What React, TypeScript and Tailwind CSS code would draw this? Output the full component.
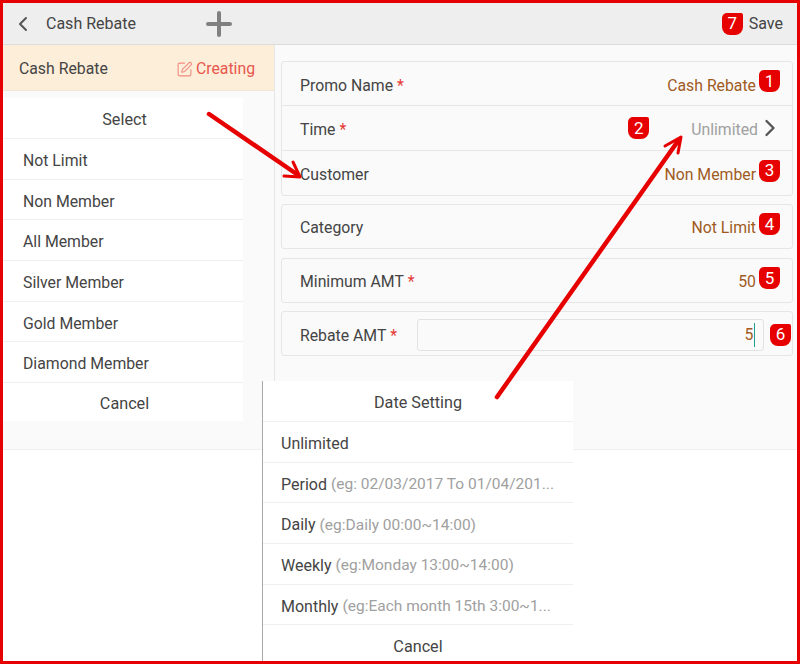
import React from 'react';
import { ChevronLeft, ChevronRight, SquarePen } from 'lucide-react';

const Badge: React.FC<{ n: number }> = ({ n }) => (
  <span className="flex h-[22px] w-[21px] shrink-0 items-center justify-center rounded-tl-[5px] rounded-tr-[2px] rounded-br-[8px] rounded-bl-[8px] bg-[#e60000] text-[17px] leading-none text-white">
    {n}
  </span>
);

const Star = () => <span className="ml-[4px] text-[#e53935]">*</span>;

const Row: React.FC<{ label: string; required?: boolean; value: string; n: number; last?: boolean; h?: string; pt?: string }> = ({ label, required, value, n, last, h = 'h-[44px]', pt = 'pt-[3px]' }) => (
  <div className={`flex ${h} items-center pl-[18px] pr-[12px] ${last ? '' : 'border-b border-[#e6e6e6]'}`}>
    <span className={pt}>{label}</span>
    {required && <span className={pt}><Star /></span>}
    <span className={`ml-auto mr-[3px] ${pt} text-[#a05a1e]`}>{value}</span>
    <span className="mb-[5px]"><Badge n={n} /></span>
  </div>
);

const Card: React.FC<{ children: React.ReactNode; className?: string }> = ({ children, className = '' }) => (
  <div className={`rounded-[3px] border border-[#e6e6e6] bg-[#fafafa] ${className}`}>{children}</div>
);

const selectOptions = ['Not Limit', 'Non Member', 'All Member', 'Silver Member', 'Gold Member', 'Diamond Member'];

const dateOptions = [
  { name: 'Unlimited', hint: '' },
  { name: 'Period', hint: '(eg: 02/03/2017 To 01/04/201...' },
  { name: 'Daily', hint: '(eg:Daily 00:00~14:00)' },
  { name: 'Weekly', hint: '(eg:Monday 13:00~14:00)' },
  { name: 'Monthly', hint: '(eg:Each month 15th 3:00~1...' },
];

export default function App() {
  return (
    <div className="relative box-border h-[664px] w-[800px] overflow-hidden border-[3px] border-[#e60000] bg-white font-['Roboto',sans-serif] text-[15.8px] text-[#444]">
      {/* top bar */}
      <div className="flex h-[42px] items-center border-b border-[#dcdcdc] bg-[#eeeeee] pl-[8px] pr-[14px]">
        <ChevronLeft size={24} strokeWidth={2} className="text-[#555]" />
        <span className="ml-[11px] pt-[1px] text-[16px]">Cash Rebate</span>
        <svg width="26" height="26" viewBox="0 0 26 26" className="ml-[70px]">
          <path d="M13 2v22M2 13h22" stroke="#808080" strokeWidth="4" strokeLinecap="round" />
        </svg>
        <div className="ml-auto flex items-center gap-[6px]">
          <Badge n={7} />
          <span className="pt-[1px] text-[16px]">Save</span>
        </div>
      </div>

      <div className="flex h-[405px] border-b border-[#f0f0f0] bg-[#fafafa]">
        {/* left list */}
        <div className="w-[272px] shrink-0 border-r border-[#e6e6e6]">
          <div className="flex h-[46px] items-center justify-between border-b border-[#f0e6d6] bg-[#fdeed9] pl-[16px] pr-[19px] pt-[3px]">
            <span>Cash Rebate</span>
            <span className="flex items-center gap-[3px] text-[#e8574e]">
              <SquarePen size={17} strokeWidth={1.5} className="text-[#ef8a80]" />
              Creating
            </span>
          </div>
        </div>

        {/* form */}
        <div className="flex-1 pl-[6px] pr-[4px] pt-[16px]">
          <Card>
            <Row label="Promo Name" required value="Cash Rebate" n={1} pt="pt-[5px]" />
            <div className="flex h-[45px] items-center border-b border-[#e6e6e6] pl-[18px] pr-[8px]">
              <span className="pt-[3px]">Time</span>
              <span className="pt-[3px]"><Star /></span>
              <span className="ml-auto"><Badge n={2} /></span>
              <span className="ml-[42px] pt-[3px] text-[#a0a0a0]">Unlimited</span>
              <ChevronRight size={28} strokeWidth={2} className="-ml-[2px] text-[#555]" />
            </div>
            <Row label="Customer" value="Non Member" n={3} last h="h-[44px]" />
          </Card>
          <Card className="mt-[8px]">
            <Row label="Category" value="Not Limit" n={4} last h="h-[43px]" />
          </Card>
          <Card className="mt-[9px]">
            <Row label="Minimum AMT" required value="50" n={5} last h="h-[43px]" />
          </Card>
          <Card className="mt-[8px]">
            <div className="flex h-[43px] items-center pl-[18px] pr-[1px]">
              <span className="pt-[4px]">Rebate AMT</span>
              <span className="pt-[4px]"><Star /></span>
              <div className="ml-[20px] mt-[3px] flex h-[32px] flex-1 items-center justify-end rounded-[3px] border border-[#e2e2e2] pr-[8px] text-[#a05a1e]">
                5<span className="h-[24px] w-[1.5px] bg-[#1fa090]" />
              </div>
              <span className="ml-[6px] mt-[2px]"><Badge n={6} /></span>
            </div>
          </Card>
        </div>
      </div>

      {/* Select dialog */}
      <div className="absolute left-0 top-[95px] w-[240px] bg-white">
        <div className="flex h-[41px] items-center justify-center border-b border-[#efefef] pl-[3px] pt-[4px] text-[16.2px]">Select</div>
        {selectOptions.map(o => (
          <div key={o} className="flex h-[40.7px] items-center border-b border-[#efefef] pl-[20px] pt-[4px]">{o}</div>
        ))}
        <div className="flex h-[38px] items-center justify-center pl-[3px] pt-[4px] text-[16.2px]">Cancel</div>
      </div>

      {/* Date Setting dialog */}
      <div className="absolute left-[259px] top-[378px] w-[311px] border-l border-[#a8a8a8] bg-white">
        <div className="flex h-[41px] items-center justify-center border-b border-[#efefef] pt-[4px] text-[16.2px]">Date Setting</div>
        {dateOptions.map(o => (
          <div key={o.name} className="flex h-[40.7px] items-center gap-[4px] border-b border-[#efefef] pl-[18px] pt-[4px]">
            <span className="text-[16px]">{o.name}</span>
            {o.hint && <span className="whitespace-nowrap text-[15.5px] text-[#a0a0a0]">{o.hint}</span>}
          </div>
        ))}
        <div className="flex h-[40px] items-center justify-center pt-[4px] text-[16.2px]">Cancel</div>
      </div>

      {/* annotation arrows */}
      <svg className="absolute -left-[3px] -top-[3px]" width="800" height="664" viewBox="0 0 800 664" fill="none" strokeLinecap="round" strokeLinejoin="round" stroke="#e60000">
        <path d="M209 114L298 175" strokeWidth="4.5" />
        <path d="M284 176L300 177L293 162" strokeWidth="3" />
        <path d="M497 397L678 141" strokeWidth="4.5" />
        <path d="M665 146L681 137L678 153" strokeWidth="3" />
      </svg>
    </div>
  );
}
